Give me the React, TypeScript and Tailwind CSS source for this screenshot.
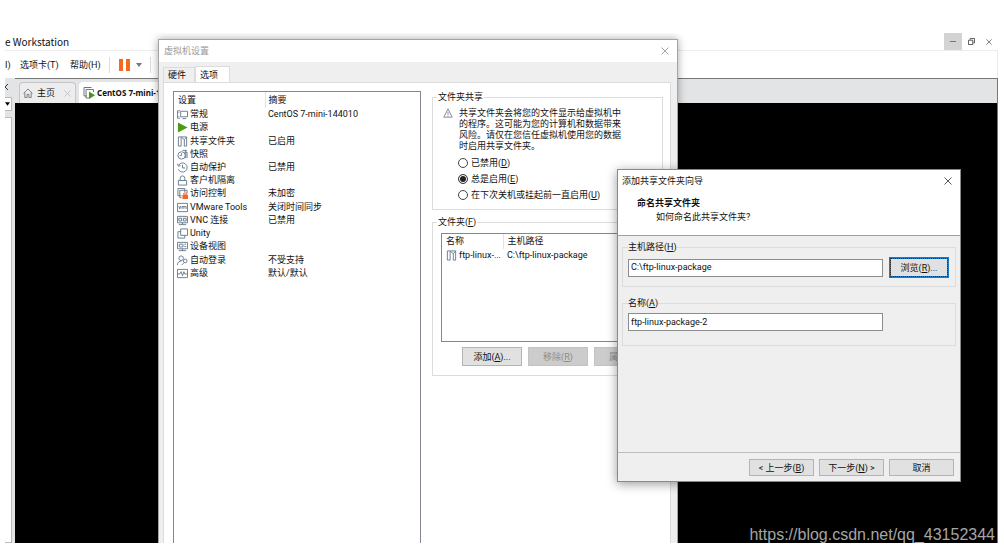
import React, { useState } from 'react';

interface OptionRow {
  icon: string;
  name: string;
  summary: string;
}

const OPTIONS: OptionRow[] = [
  { icon: 'general', name: '常规', summary: 'CentOS 7-mini-144010' },
  { icon: 'power', name: '电源', summary: '' },
  { icon: 'folder', name: '共享文件夹', summary: '已启用' },
  { icon: 'snapshot', name: '快照', summary: '' },
  { icon: 'protect', name: '自动保护', summary: '已禁用' },
  { icon: 'lock', name: '客户机隔离', summary: '' },
  { icon: 'access', name: '访问控制', summary: '未加密' },
  { icon: 'tools', name: 'VMware Tools', summary: '关闭时间同步' },
  { icon: 'vnc', name: 'VNC 连接', summary: '已禁用' },
  { icon: 'unity', name: 'Unity', summary: '' },
  { icon: 'device', name: '设备视图', summary: '' },
  { icon: 'login', name: '自动登录', summary: '不受支持' },
  { icon: 'advanced', name: '高级', summary: '默认/默认' },
];

const ICONS: Record<string, React.ReactNode> = {
  general: (
    <>
      <path d="M3.5 2H.5v8h3M4 2.5h7.5v6H4zM6 10.5h4" />
      <path d="M1.5 4h1M1.5 8h1" />
    </>
  ),
  power: <path d="M1 .5v11L11.5 6z" fill="#4a9a12" stroke="none" />,
  folder: <path d="M1.5 1h3v10h-3zM4.5 1h6v10H8M5 1.500L8 4V11M10.500 1L8 4" />,
  snapshot: (
    <>
      <circle cx="5" cy="7" r="4" />
      <path d="M5 4.5V7H3M6 1.5h4.5M8 3.5h3v6.5M9.5 1v9" />
    </>
  ),
  protect: <path d="M1.5 4A5 5 0 1 1 1.5 8M.5 2l1 2.5L4 4M6 3v3.5h3" />,
  lock: <path d="M1.500 6h9v5h-9zM3.500 6V3.500a2.500 2.500 0 0 1 5 0V6" />,
  access: (
    <>
      <path d="M5 8.500H1V.5h7.500v4M5 10.500H3V2.500h8v3" />
      <path d="M6.500 7.500h5v4.500h-5z" fill="#f2642a" stroke="#f2642a" />
      <path d="M7.500 7V5.500h3V7" stroke="#f2642a" />
    </>
  ),
  tools: (
    <>
      <path d="M.5 1.500h11v9H.5z" />
      <path d="M2 4.500L3 7.500 4 4.500M5.500 7.500v-3M5.500 5h2v2.500M7.500 5H10v2.500" />
    </>
  ),
  vnc: <path d="M.5 1.500h11v7H.5zM2 3.500h3v3H2zM7 3.500h3v3H7zM6 8.500v2M2 10.500h8" />,
  unity: <path d="M4 1h7.500v7H4zM4 4H1v7h7.500V8" />,
  device: <path d="M.5 1.500h11v7H.5zM2.500 3.500h4v3h-4zM8 3.500h2M8 6h2M6 8.500v2M2 10.500h8" />,
  login: (
    <>
      <circle cx="4.500" cy="3.500" r="2.500" />
      <path d="M.5 11c0-3 2-4.500 4.500-4.500M5 11l3-3" />
      <circle cx="9" cy="6.500" r="2" />
    </>
  ),
  advanced: <path d="M.5 1.500h11v9H.5zM0 6.500h3L4.500 4 6 8.500 7.500 4l1 2.500H12" />,
};

const RowIcon = ({ name }: { name: string }) => (
  <svg viewBox="0 0 12 12" className="w-[11px] h-[11px] shrink-0" fill="none" stroke="#64788a" strokeWidth="1">
    {ICONS[name]}
  </svg>
);

const Cross = ({ className }: { className: string }) => (
  <svg viewBox="0 0 8 8" className={className} fill="none" stroke="currentColor" strokeWidth="0.9">
    <path d="M.5.5l7 7M7.5.5l-7 7" />
  </svg>
);

// label followed by its access key, e.g. 添加(A)
const Key = ({ text, k, after = '' }: { text: string; k: string; after?: string }) => (
  <>{text}(<u>{k}</u>){after}</>
);

const BTN = 'border border-[#b4b4b4] bg-[#e1e1e1] text-center whitespace-nowrap';

const MainWindow = () => (
  <div className="h-full flex flex-col">
    <header className="h-[17px] flex items-center justify-between">
      <h1 className="whitespace-nowrap text-[10px] font-['Noto_Sans_CJK_SC',sans-serif]">e Workstation</h1>
      <div className="flex h-full text-[#444]">
        <button aria-label="最小化" className="w-[18px] h-full bg-[#d3d3d3] grid place-items-center">
          <span className="w-[6px] h-px bg-[#777]" />
        </button>
        <button aria-label="还原" className="w-[18px] h-full grid place-items-center">
          <svg viewBox="0 0 8 8" className="w-[7px] h-[7px]" fill="none" stroke="currentColor">
            <path d="M.5 2.5h5v5h-5zM2.500 2V.5h5v5H6" />
          </svg>
        </button>
        <button aria-label="关闭" className="w-[18px] h-full grid place-items-center">
          <Cross className="w-[6px] h-[6px]" />
        </button>
      </div>
    </header>

    <nav className="h-7 flex items-center border-t border-r border-[#ececec] whitespace-nowrap">
      <button className="w-[15px] text-left">I)</button>
      <button className="w-[50px] text-left">选项卡(T)</button>
      <button className="w-[39px] text-left">帮助(H)</button>
      <span className="w-px h-4 bg-[#ddd]" />
      <button aria-label="挂起" className="ml-[9px] w-[11px] h-3 flex justify-between">
        <span className="w-1 h-full bg-[#f26a21]" />
        <span className="w-1 h-full bg-[#f26a21]" />
      </button>
      <button aria-label="更多" className="ml-[6px]">
        <svg viewBox="0 0 6 4" className="w-[6px] h-1"><path d="M0 0h6L3 4z" fill="#777" /></svg>
      </button>
      <span className="ml-2 w-px h-4 bg-[#ddd]" />
    </nav>

    <div className="flex-1 flex min-h-0">
      <aside className="w-[10px] flex flex-col bg-[#e3e4e6]">
        <svg viewBox="0 0 4 6" className="w-1 h-[6px] mt-[6px]" fill="none" stroke="#333">
          <path d="M3 0L0 3l3 3" />
        </svg>
        <div className="mt-[7px] mr-[3px] h-[14px] bg-white border border-l-0 border-[#bbb] flex items-center">
          <svg viewBox="0 0 6 4" className="w-[5px] h-1"><path d="M0 0h6L3 4z" /></svg>
        </div>
        <div className="mt-[6px] mr-[3px] flex-1 bg-white border border-l-0 border-[#bbb]" />
      </aside>
      <div className="flex-1 flex flex-col border-t border-r border-[#777] bg-black">
        <div className="h-6 flex items-end bg-[#e3e4e6] pl-1 whitespace-nowrap">
          <div className="w-[57px] h-[21px] flex items-center pl-[3px] border border-b-0 border-[#c4c6c9] rounded-t bg-[#ededee]">
            <svg viewBox="0 0 11 11" className="w-[10px] h-[10px]" fill="none" stroke="#777">
              <path d="M.5 6l5-5 5 5M2 5v5.500h2.500V7h2v3.500H9V5" />
            </svg>
            <span className="ml-1">主页</span>
            <Cross className="w-[7px] h-[7px] ml-auto mr-1 text-[#bbb]" />
          </div>
          <div className="ml-[3px] w-[84px] h-[21px] flex items-center pl-1 rounded-t bg-white">
            <svg viewBox="0 0 12 12" className="w-3 h-3 shrink-0" fill="none" stroke="#777">
              <path d="M4 9H1V.5h7.500M6 11H3V2.500h7.500V5" />
              <path d="M6 4.500v7.500l6-3.700z" fill="#3f9a1b" stroke="none" />
            </svg>
            <b className="ml-[2px] text-[8px] font-['Noto_Sans',sans-serif]">CentOS 7-mini-1</b>
          </div>
        </div>
      </div>
    </div>
  </div>
);

const SettingsDialog = () => {
  const [mode, setMode] = useState('enabled');
  const modes = [
    { id: 'disabled', text: '已禁用', k: 'D' },
    { id: 'enabled', text: '总是启用', k: 'E' },
    { id: 'until', text: '在下次关机或挂起前一直启用', k: 'U' },
  ];

  return (
    <section className="absolute left-[153px] top-[6px] bottom-0 w-[520px] flex flex-col bg-[#efefef] border border-b-0 border-[#a5a5a5] shadow-[0_0_8px_rgba(0,0,0,0.35)]">
      <div className="h-[22px] shrink-0 flex items-center justify-between pl-[5px] pr-2 bg-white text-[#999]">
        <h2>虚拟机设置</h2>
        <button aria-label="关闭"><Cross className="w-[8px] h-[8px]" /></button>
      </div>
      <div className="flex-1 min-h-0 flex flex-col pt-1 pl-1 pr-[6px]">
        <div className="flex items-end">
          <button className="w-8 h-[15px] pl-1 text-left border border-b-0 border-[#dcdcdc]">硬件</button>
          <button className="w-[35px] h-4 pl-1 text-left border border-b-0 border-[#dcdcdc] bg-white">选项</button>
        </div>
        <div className="flex-1 min-h-0 flex border border-b-0 border-[#dcdcdc] bg-white pl-[9px] pt-2">
          <div className="w-[248px] border border-b-0 border-[#828790]">
            <table className="w-full h-[188px] table-fixed text-left leading-[13px] whitespace-nowrap">
              <thead>
                <tr className="h-4">
                  <th className="w-[91px] p-0 pl-1 font-normal border-r border-[#e3e3e3]">设置</th>
                  <th className="p-0 pl-[3px] font-normal">摘要</th>
                </tr>
              </thead>
              <tbody>
                {OPTIONS.map((o) => (
                  <tr key={o.icon}>
                    <td className="p-0 pl-[3px]">
                      <div className="flex items-center gap-[2px]"><RowIcon name={o.icon} />{o.name}</div>
                    </td>
                    <td className="p-0 pl-[3px]">{o.summary}</td>
                  </tr>
                ))}
              </tbody>
            </table>
          </div>

          <div className="ml-[11px] w-[231px]">
            <fieldset className="h-[119px] border border-[#dcdcdc] pl-[10px]">
              <legend className="ml-[-6px] px-px leading-3">文件夹共享</legend>
              <div className="flex mt-[5px]">
                <svg viewBox="0 0 12 12" className="w-[10px] h-[10px]" fill="none" stroke="#64788a">
                  <path d="M6 1l5 10H1zM6 4.500v3.500M6 9v1" />
                </svg>
                <p className="ml-[6px] w-[165px] leading-[11px]">
                  共享文件夹会将您的文件显示给虚拟机中的程序。这可能为您的计算机和数据带来风险。请仅在您信任虚拟机使用您的数据时启用共享文件夹。
                </p>
              </div>
              <div className="mt-[3px] ml-[15px]">
                {modes.map((m) => (
                  <label key={m.id} className="h-4 flex items-center gap-[3px]">
                    <input
                      type="radio"
                      name="mode"
                      checked={mode === m.id}
                      onChange={() => setMode(m.id)}
                      className="appearance-none w-[10px] h-[10px] rounded-full border border-[#444] bg-white checked:bg-[#222] checked:shadow-[inset_0_0_0_1px_white]"
                    />
                    <span><Key text={m.text} k={m.k} /></span>
                  </label>
                ))}
              </div>
            </fieldset>

            <fieldset className="mt-[6px] h-[160px] border border-[#dcdcdc] pl-2">
              <legend className="ml-[-4px] px-px leading-3"><Key text="文件夹" k="F" /></legend>
              <div className="mt-[5px] w-[213px] h-[109px] border border-[#828790]">
                <table className="w-full table-fixed text-left leading-[13px] whitespace-nowrap">
                  <thead>
                    <tr className="h-[15px]">
                      <th className="w-[61px] p-0 pl-1 font-normal border-r border-[#e3e3e3]">名称</th>
                      <th className="p-0 pl-1 font-normal">主机路径</th>
                    </tr>
                  </thead>
                  <tbody>
                    <tr>
                      <td className="p-0 pl-1">
                        <div className="flex items-center gap-[2px]"><RowIcon name="folder" />ftp-linux-...</div>
                      </td>
                      <td className="p-0 pl-1">C:\ftp-linux-package</td>
                    </tr>
                  </tbody>
                </table>
              </div>
              <div className="mt-[5px] ml-[21px] flex gap-[6px]">
                <button className={`w-[60px] h-[19px] ${BTN}`}><Key text="添加" k="A" after="..." /></button>
                <button disabled className="w-[60px] h-[19px] border border-[#c3c3c3] bg-[#cccccc] text-[#8c8c8c]"><Key text="移除" k="R" /></button>
                <button disabled className="w-[60px] h-[19px] border border-[#c3c3c3] bg-[#cccccc] text-[#8c8c8c]"><Key text="属性" k="P" /></button>
              </div>
            </fieldset>
          </div>
        </div>
      </div>
    </section>
  );
};

const WizardDialog = () => {
  const [path, setPath] = useState('C:\\ftp-linux-package');
  const [name, setName] = useState('ftp-linux-package-2');

  return (
    <section className="absolute left-[612px] top-[136px] w-[344px] h-[313px] flex flex-col bg-[#efefef] border border-[#8a8a8a] shadow-[0_2px_10px_rgba(0,0,0,0.4)]">
      <div className="h-[66px] bg-white border-b border-[#a0a0a0] pl-1 pr-2">
        <div className="h-[22px] flex items-center justify-between">
          <h2>添加共享文件夹向导</h2>
          <button aria-label="关闭" className="text-[#444]"><Cross className="w-[8px] h-[8px]" /></button>
        </div>
        <h3 className="mt-1 pl-[15px] font-bold leading-[14px]">命名共享文件夹</h3>
        <p className="pl-[34px] leading-[14px]">如何命名此共享文件夹?</p>
      </div>
      <div className="flex-1 px-1 pt-[5px]">
        <fieldset className="h-[46px] border border-[#dcdcdc] pl-[5px]">
          <legend className="leading-3"><label htmlFor="path"><Key text="主机路径" k="H" /></label></legend>
          <div className="flex items-center gap-[6px] mt-1">
            <input id="path" value={path} onChange={(e) => setPath(e.target.value)} className="w-[255px] h-[18px] px-[2px] pb-px border border-[#8c8c8c] bg-white" />
            <button className="w-[60px] h-[21px] border-2 border-[#1979ca] bg-[#e1e1e1] outline-1 outline-dotted outline-[#333] -outline-offset-2 whitespace-nowrap">
              <Key text="浏览" k="R" after="..." />
            </button>
          </div>
        </fieldset>
        <fieldset className="mt-[10px] h-[49px] border border-[#dcdcdc] pl-[5px]">
          <legend className="leading-3"><label htmlFor="name"><Key text="名称" k="A" /></label></legend>
          <input id="name" value={name} onChange={(e) => setName(e.target.value)} className="block mt-1 w-[255px] h-[18px] px-[2px] pb-px border border-[#8c8c8c] bg-white" />
        </fieldset>
      </div>
      <div className="h-[29px] border-t border-[#bcbcbc] flex justify-end gap-[5px] pt-[6px] pr-[6px]">
        <button className={`w-[65px] h-[17px] leading-[14px] ${BTN}`}>&lt; <Key text="上一步" k="B" /></button>
        <button className={`w-[65px] h-[17px] leading-[14px] ${BTN}`}><Key text="下一步" k="N" after=" >" /></button>
        <button className={`w-[65px] h-[17px] leading-[14px] ${BTN}`}>取消</button>
      </div>
    </section>
  );
};

export default function App() {
  return (
    <main className="h-screen bg-white pt-[33px] pl-[5px] pr-[6px] pb-[11px] text-[9px] leading-3 text-[#111] font-[Roboto,'Noto_Sans_CJK_SC',sans-serif]">
      <div className="relative h-full overflow-hidden">
        <MainWindow />
        <SettingsDialog />
        <WizardDialog />
        <p className="absolute right-[3px] bottom-0 text-base leading-4 text-[#a6a6a6] font-['Liberation_Sans',sans-serif]">
          https://blog.csdn.net/qq_43152344
        </p>
      </div>
    </main>
  );
}
